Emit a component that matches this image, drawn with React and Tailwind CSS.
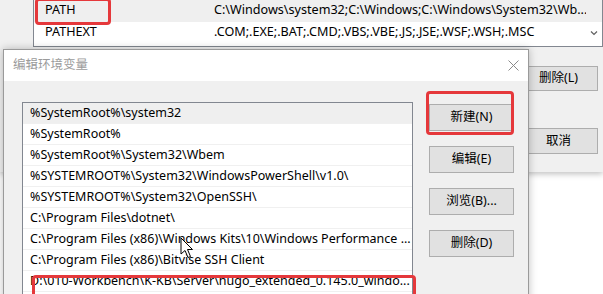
const font = { fontFamily: '"Noto Sans", "Noto Sans CJK SC", sans-serif' };

const paths = [
  "%SystemRoot%\\system32",
  "%SystemRoot%",
  "%SystemRoot%\\System32\\Wbem",
  "%SYSTEMROOT%\\System32\\WindowsPowerShell\\v1.0\\",
  "%SYSTEMROOT%\\System32\\OpenSSH\\",
  "C:\\Program Files\\dotnet\\",
  "C:\\Program Files (x86)\\Windows Kits\\10\\Windows Performance ...",
  "C:\\Program Files (x86)\\Bitvise SSH Client",
  "D:\\010-Workbench\\K-KB\\Server\\hugo_extended_0.145.0_windo...",
];

function WinButton({ children, className = "" }) {
  return (
    <div className={`flex items-center justify-center border border-[#adadad] bg-[#e1e1e1] text-[12.5px] text-black ${className}`}>
      {children}
    </div>
  );
}

// Windows arrow pointer
function Cursor() {
  return (
    <svg width="14" height="22" viewBox="0 0 14 22" className="absolute left-[180px] top-[237px]">
      <path d="M1 1 L1 17 L5 13.5 L8 20.5 L10.5 19.5 L7.5 12.5 L12.5 12.5 Z" fill="#fff" stroke="#000" strokeWidth="1" strokeLinejoin="round" />
    </svg>
  );
}

export default function App() {
  return (
    <div className="relative h-[294px] w-[603px] overflow-hidden bg-white text-[12.6px] text-black" style={font}>
      {/* background window: 环境变量 */}
      <div className="absolute left-0 top-[-30px] h-[202px] w-[603px] bg-[#f0f0f0] shadow-[0_2px_6px_rgba(0,0,0,0.25)]">
        <div className="absolute left-[33px] top-[28px] h-[49px] w-[570px] border border-[#828790] bg-white">
          <div className="flex h-[23px] items-center bg-[#efefef]">
            <span className="w-[180px] shrink-0 pl-[11px]">PATH</span>
            <span className="flex-1 overflow-hidden whitespace-nowrap">C:\Windows\system32;C:\Windows;C:\Windows\System32\Wb...</span>
            <span className="w-[16px] shrink-0" />
          </div>
          <div className="flex h-[21px] items-center">
            <span className="w-[180px] shrink-0 pl-[11px]">PATHEXT</span>
            <span className="flex-1 overflow-hidden whitespace-nowrap">.COM;.EXE;.BAT;.CMD;.VBS;.VBE;.JS;.JSE;.WSF;.WSH;.MSC</span>
            <span className="flex w-[16px] shrink-0 justify-center">
              <svg width="8" height="6" viewBox="0 0 8 6"><path d="M1 1.5 L4 4.5 L7 1.5" fill="none" stroke="#606060" strokeWidth="1.2" /></svg>
            </span>
          </div>
        </div>
        <WinButton className="absolute left-[519px] top-[96px] h-[25px] w-[79px]">删除(L)</WinButton>
        <WinButton className="absolute left-[519px] top-[158px] h-[26px] w-[79px]">取消</WinButton>
      </div>

      {/* red mark on PATH */}
      <div className="absolute left-[35px] top-[-2px] h-[27px] w-[76px] rounded-[4px] border-[3px] border-[#e5383b]" />

      {/* dialog: 编辑环境变量 */}
      <div className="absolute left-[3px] top-[49px] h-[260px] w-[526px] border border-[#9a9a9a] bg-[#f0f0f0] shadow-[0_0_8px_rgba(0,0,0,0.25)]">
        <div className="flex h-[31px] items-center justify-between bg-white pl-[9px] pr-[9px]">
          <span className="text-[12.5px] text-[#9b9b9b]">编辑环境变量</span>
          <svg width="11" height="11" viewBox="0 0 11 11"><path d="M0.5 0.5 L10.5 10.5 M10.5 0.5 L0.5 10.5" stroke="#8a8a8a" strokeWidth="1" /></svg>
        </div>
        <div className="flex gap-[16px] pl-[18px] pt-[21px]">
          <div className="h-[220px] w-[391px] border border-[#828790] bg-white text-[12.5px]">
            {paths.map((p, i) => (
              <div key={p} className={`flex h-[21px] items-center border-b border-[#f0f0f0] pl-[7px] ${i === 0 ? "bg-[#efefef]" : ""}`}>
                <span className="whitespace-nowrap">{p}</span>
              </div>
            ))}
          </div>
          <div className="flex flex-col gap-[15px] pt-[2px]">
            <WinButton className="h-[27px] w-[85px]">新建(N)</WinButton>
            <WinButton className="h-[27px] w-[85px]">编辑(E)</WinButton>
            <WinButton className="h-[27px] w-[85px]">浏览(B)...</WinButton>
            <WinButton className="h-[27px] w-[85px]">删除(D)</WinButton>
          </div>
        </div>
      </div>

      {/* red marks in dialog */}
      <div className="absolute left-[426px] top-[91px] h-[44px] w-[88px] rounded-[4px] border-[3px] border-[#e5383b]" />
      <div className="absolute left-[32px] top-[275px] h-[30px] w-[384px] rounded-[4px] border-[3px] border-[#e5383b]" />

      <Cursor />
    </div>
  );
}
